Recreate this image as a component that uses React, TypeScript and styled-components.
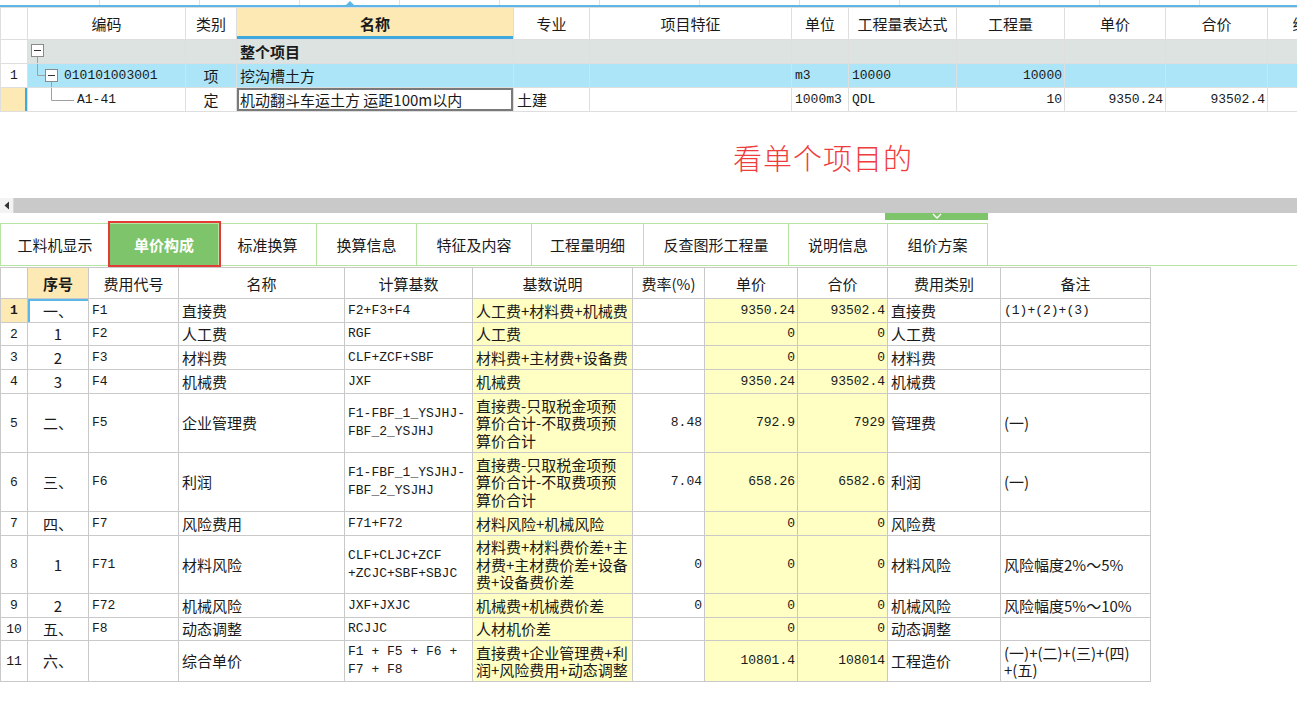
import React from "react";
import styled, { createGlobalStyle, css } from "styled-components";

const CJK = `"Noto Sans CJK SC", "Noto Sans", sans-serif`;
const MONO = `"Liberation Mono", "Noto Sans CJK SC", monospace`;

const GlobalStyle = createGlobalStyle`
  html, body { margin: 0; padding: 0; background: #fff; }
  body { font-family: ${CJK}; color: #1a1a1a; }
`;

const Page = styled.div`
  width: 1297px;
  height: 701px;
  overflow: hidden;
  display: flex;
  flex-direction: column;
  background: #fff;
`;

const TopStrip = styled.div`
  position: relative;
  flex: none;
  height: 5px;
  display: flex;
  border-bottom: 2px solid #5cb6e6;
`;
const StripSeg = styled.div`
  flex: none;
  width: 100px;
  box-sizing: border-box;
  border-right: 1px solid #e2e2e2;
`;
const StripMark = styled.div`
  position: absolute;
  left: 346px;
  bottom: 0;
  border-left: 4px solid transparent;
  border-right: 4px solid transparent;
  border-bottom: 4px solid #5cb6e6;
`;

const GridClip = styled.div`
  flex: none;
  width: 1297px;
  overflow: hidden;
`;

const Grid = styled.table<{ $w: number; $line: string }>`
  table-layout: fixed;
  border-collapse: collapse;
  width: ${(p) => p.$w}px;
  flex: none;
  font-family: ${CJK};
  font-size: 15px;
  color: #1a1a1a;
  td, th { border: 1px solid ${(p) => p.$line}; }
`;

const Row = styled.tr<{ $h: number; $bg?: string }>`
  height: ${(p) => p.$h}px;
  background: ${(p) => p.$bg ?? "transparent"};
`;

const Head = styled.th<{ $bg?: string; $bold?: boolean; $accent?: boolean }>`
  padding: 0 2px;
  font-weight: ${(p) => (p.$bold ? 700 : 400)};
  font-size: 15px;
  text-align: center;
  white-space: nowrap;
  overflow: hidden;
  background: ${(p) => p.$bg ?? "#fff"};
  ${(p) => p.$accent && css`box-shadow: inset 0 -3px 0 #3fa8df;`}
`;

type CellProps = {
  $align?: "left" | "center" | "right";
  $bg?: string;
  $mono?: boolean;
  $bold?: boolean;
  $ring?: string;
  $edge?: string;
};

const Cell = styled.td<CellProps>`
  padding: 0 ${(p) => (p.$align === "right" ? 2 : 3)}px;
  text-align: ${(p) => p.$align ?? "left"};
  background: ${(p) => p.$bg ?? "transparent"};
  font-family: ${(p) => (p.$mono ? MONO : CJK)};
  font-size: ${(p) => (p.$mono ? 13 : 15)}px;
  font-weight: ${(p) => (p.$bold ? 700 : 400)};
  line-height: ${(p) => (p.$mono ? 18 : 17.5)}px;
  white-space: nowrap;
  overflow: hidden;
  vertical-align: middle;
  ${(p) => p.$ring && css`box-shadow: inset 0 0 0 2px ${p.$ring};`}
  ${(p) => p.$edge && css`box-shadow: inset 2px 2px 0 ${p.$edge};`}
`;

const NumCell = styled.td<{ $bg?: string; $bold?: boolean; $edge?: boolean }>`
  padding: 0;
  text-align: center;
  font-family: ${MONO};
  font-size: 13px;
  font-weight: ${(p) => (p.$bold ? 700 : 400)};
  background: ${(p) => p.$bg ?? "#fff"};
  ${(p) => p.$edge && css`box-shadow: inset -2px 0 0 #3fa8df;`}
`;

const Tree = styled.div`
  display: flex;
  align-items: center;
  height: 23px;
  gap: 3px;
`;

const Code = styled.span`
  font-family: ${MONO};
  font-size: 13px;
`;

const Note = styled.div`
  flex: none;
  height: 86px;
  display: flex;
  align-items: center;
  padding-left: 733px;
  padding-top: 3px;
  box-sizing: border-box;
  color: #ef3d3d;
  font-family: ${CJK};
  font-weight: 300;
  font-size: 29px;
  letter-spacing: 1px;
`;

const ScrollBar = styled.div`
  flex: none;
  height: 15px;
  display: flex;
  background: #c9c9c9;
`;
const ScrollBtn = styled.div`
  width: 13px;
  display: flex;
  align-items: center;
  justify-content: center;
  background: #f3f3f3;
  border-right: 1px solid #d8d8d8;
`;

const HandleRow = styled.div`
  flex: none;
  height: 10px;
`;
const Handle = styled.div`
  margin-left: 885px;
  width: 103px;
  height: 7px;
  background: #7ec46b;
  display: flex;
  justify-content: center;
`;

const Tabs = styled.div`
  flex: none;
  display: flex;
  height: 42px;
  border-bottom: 1px solid #b7e3a3;
`;
const Tab = styled.div<{ $w: number; $active?: boolean }>`
  flex: none;
  width: ${(p) => p.$w}px;
  box-sizing: border-box;
  display: flex;
  align-items: center;
  justify-content: center;
  border: 1px solid #b7e3a3;
  border-bottom: none;
  border-left-width: 0;
  &:first-child { border-left-width: 1px; }
  font-size: 15px;
  color: #1a1a1a;
  ${(p) =>
    p.$active &&
    css`
      position: relative;
      z-index: 1;
      background: #7ec46b;
      color: #fff;
      font-weight: 700;
      outline: 2px solid #e33b36;
      outline-offset: 0;
    `}
`;

const TableGap = styled.div`
  flex: none;
  height: 1px;
`;

const Minus = ({ x, y }: { x: number; y: number }) => (
  <g>
    <rect x={x + 0.5} y={y + 0.5} width={12} height={12} fill="#fff" stroke="#8a8a8a" />
    <line x1={x + 3} y1={y + 6.5} x2={x + 10} y2={y + 6.5} stroke="#333" />
  </g>
);

const topCols = [27, 158, 51, 277, 76, 202, 57, 108, 108, 101, 102, 110];
const topHeads = ["", "编码", "类别", "名称", "专业", "项目特征", "单位", "工程量表达式", "工程量", "单价", "合价", "综合单价"];

const lowCols = [27, 61, 90, 166, 128, 160, 72, 93, 90, 113, 150];
const lowHeads = ["", "序号", "费用代号", "名称", "计算基数", "基数说明", "费率(%)", "单价", "合价", "费用类别", "备注"];

type Line = {
  n: string;
  seq: string;
  code: string;
  name: string;
  base: string[];
  desc: string[];
  rate?: string;
  price: string;
  total: string;
  kind: string;
  note?: string[];
  monoNote?: boolean;
  h: number;
};

const longBase = ["F1-FBF_1_YSJHJ-", "FBF_2_YSJHJ"];
const longDesc = ["直接费-只取税金项预", "算价合计-不取费项预", "算价合计"];

const lines: Line[] = [
  { n: "1", seq: "一、", code: "F1", name: "直接费", base: ["F2+F3+F4"], desc: ["人工费+材料费+机械费"], price: "9350.24", total: "93502.4", kind: "直接费", note: ["(1)+(2)+(3)"], monoNote: true, h: 24 },
  { n: "2", seq: "1", code: "F2", name: "人工费", base: ["RGF"], desc: ["人工费"], price: "0", total: "0", kind: "人工费", h: 23 },
  { n: "3", seq: "2", code: "F3", name: "材料费", base: ["CLF+ZCF+SBF"], desc: ["材料费+主材费+设备费"], price: "0", total: "0", kind: "材料费", h: 24 },
  { n: "4", seq: "3", code: "F4", name: "机械费", base: ["JXF"], desc: ["机械费"], price: "9350.24", total: "93502.4", kind: "机械费", h: 24 },
  { n: "5", seq: "二、", code: "F5", name: "企业管理费", base: longBase, desc: longDesc, rate: "8.48", price: "792.9", total: "7929", kind: "管理费", note: ["(一)"], h: 59 },
  { n: "6", seq: "三、", code: "F6", name: "利润", base: longBase, desc: longDesc, rate: "7.04", price: "658.26", total: "6582.6", kind: "利润", note: ["(一)"], h: 59 },
  { n: "7", seq: "四、", code: "F7", name: "风险费用", base: ["F71+F72"], desc: ["材料风险+机械风险"], price: "0", total: "0", kind: "风险费", h: 24 },
  { n: "8", seq: "1", code: "F71", name: "材料风险", base: ["CLF+CLJC+ZCF", "+ZCJC+SBF+SBJC"], desc: ["材料费+材料费价差+主", "材费+主材费价差+设备", "费+设备费价差"], rate: "0", price: "0", total: "0", kind: "材料风险", note: ["风险幅度2%～5%"], h: 58 },
  { n: "9", seq: "2", code: "F72", name: "机械风险", base: ["JXF+JXJC"], desc: ["机械费+机械费价差"], rate: "0", price: "0", total: "0", kind: "机械风险", note: ["风险幅度5%～10%"], h: 24 },
  { n: "10", seq: "五、", code: "F8", name: "动态调整", base: ["RCJJC"], desc: ["人材机价差"], price: "0", total: "0", kind: "动态调整", h: 23 },
  { n: "11", seq: "六、", code: "", name: "综合单价", base: ["F1 + F5 + F6 +", "F7 + F8"], desc: ["直接费+企业管理费+利", "润+风险费用+动态调整"], price: "10801.4", total: "108014", kind: "工程造价", note: ["(一)+(二)+(三)+(四)", "+(五)"], h: 41 },
];

const Multi = ({ rows }: { rows: string[] }) => (
  <>
    {rows.map((r, i) => (
      <React.Fragment key={i}>
        {i > 0 && <br />}
        {r}
      </React.Fragment>
    ))}
  </>
);

const YELLOW = "#ffffc4";
const HEAD_YELLOW = "#fde9b3";

export default function App() {
  return (
    <Page>
      <GlobalStyle />
      <TopStrip>
        {Array.from({ length: 13 }).map((_, i) => (
          <StripSeg key={i} />
        ))}
        <StripMark />
      </TopStrip>

      <GridClip>
        <Grid $w={1377} $line="#dedede">
          <colgroup>
            {topCols.map((w, i) => (
              <col key={i} style={{ width: w }} />
            ))}
          </colgroup>
          <tbody>
            <Row $h={32}>
              {topHeads.map((h, i) => (
                <Head key={i} $bold={i === 3} $bg={i === 3 ? HEAD_YELLOW : undefined} $accent={i === 3}>
                  {h}
                </Head>
              ))}
            </Row>
            <Row $h={24} $bg="#dce3e0">
              <NumCell />
              <Cell>
                <Tree>
                  <svg width="17" height="23" viewBox="0 0 17 23">
                    <line x1="6.5" y1="17" x2="6.5" y2="23" stroke="#a0a0a0" />
                    <Minus x={0} y={4} />
                  </svg>
                </Tree>
              </Cell>
              <Cell />
              <Cell $bold>整个项目</Cell>
              {Array.from({ length: 8 }).map((_, i) => (
                <Cell key={i} />
              ))}
            </Row>
            <Row $h={24} $bg="#ade5f8">
              <NumCell $bg="#fff">1</NumCell>
              <Cell>
                <Tree>
                  <svg width="30" height="23" viewBox="0 0 30 23">
                    <polyline points="6.5,0 6.5,11.5 14,11.5" fill="none" stroke="#a0a0a0" />
                    <line x1="20.5" y1="17" x2="20.5" y2="23" stroke="#a0a0a0" />
                    <Minus x={14} y={5} />
                  </svg>
                  <Code>010101003001</Code>
                </Tree>
              </Cell>
              <Cell $align="center">项</Cell>
              <Cell>挖沟槽土方</Cell>
              <Cell />
              <Cell />
              <Cell $mono>m3</Cell>
              <Cell $mono>10000</Cell>
              <Cell $mono $align="right">10000</Cell>
              <Cell />
              <Cell />
              <Cell />
            </Row>
            <Row $h={24}>
              <NumCell $bg={HEAD_YELLOW} $edge />
              <Cell>
                <Tree>
                  <svg width="43" height="23" viewBox="0 0 43 23">
                    <polyline points="20.5,0 20.5,12.5 43,12.5" fill="none" stroke="#a0a0a0" />
                  </svg>
                  <Code>A1-41</Code>
                </Tree>
              </Cell>
              <Cell $align="center">定</Cell>
              <Cell $ring="#7a7a7a">机动翻斗车运土方 运距100m以内</Cell>
              <Cell>土建</Cell>
              <Cell />
              <Cell $mono>1000m3</Cell>
              <Cell $mono>QDL</Cell>
              <Cell $mono $align="right">10</Cell>
              <Cell $mono $align="right">9350.24</Cell>
              <Cell $mono $align="right">93502.4</Cell>
              <Cell />
            </Row>
          </tbody>
        </Grid>
      </GridClip>

      <Note>看单个项目的</Note>

      <ScrollBar>
        <ScrollBtn>
          <svg width="6" height="9" viewBox="0 0 6 9">
            <polygon points="5,0.5 5,8.5 0.5,4.5" fill="#333" />
          </svg>
        </ScrollBtn>
      </ScrollBar>

      <HandleRow>
        <Handle>
          <svg width="12" height="7" viewBox="0 0 12 7">
            <polyline points="2,1 6,5 10,1" fill="none" stroke="#fff" strokeWidth="1.4" />
          </svg>
        </Handle>
      </HandleRow>

      <Tabs>
        <Tab $w={110}>工料机显示</Tab>
        <Tab $w={109} $active>单价构成</Tab>
        <Tab $w={98}>标准换算</Tab>
        <Tab $w={100}>换算信息</Tab>
        <Tab $w={115}>特征及内容</Tab>
        <Tab $w={112}>工程量明细</Tab>
        <Tab $w={145}>反查图形工程量</Tab>
        <Tab $w={99}>说明信息</Tab>
        <Tab $w={100}>组价方案</Tab>
      </Tabs>

      <TableGap />

      <Grid $w={1150} $line="#c9c9c9">
        <colgroup>
          {lowCols.map((w, i) => (
            <col key={i} style={{ width: w }} />
          ))}
        </colgroup>
        <tbody>
          <Row $h={31}>
            {lowHeads.map((h, i) => (
              <Head key={i} $bold={i === 1} $bg={i === 1 ? HEAD_YELLOW : undefined}>
                {h}
              </Head>
            ))}
          </Row>
          {lines.map((l, i) => (
            <Row key={l.n} $h={l.h}>
              <NumCell $bg={i === 0 ? HEAD_YELLOW : undefined} $bold={i === 0}>
                {l.n}
              </NumCell>
              <Cell $align="center" $edge={i === 0 ? "#5cb6e6" : undefined}>
                {l.seq}
              </Cell>
              <Cell $mono>{l.code}</Cell>
              <Cell>{l.name}</Cell>
              <Cell $mono>
                <Multi rows={l.base} />
              </Cell>
              <Cell $bg={YELLOW}>
                <Multi rows={l.desc} />
              </Cell>
              <Cell $mono $align="right">
                {l.rate ?? ""}
              </Cell>
              <Cell $mono $align="right" $bg={YELLOW}>
                {l.price}
              </Cell>
              <Cell $mono $align="right" $bg={YELLOW}>
                {l.total}
              </Cell>
              <Cell>{l.kind}</Cell>
              <Cell $mono={l.monoNote}>
                <Multi rows={l.note ?? []} />
              </Cell>
            </Row>
          ))}
        </tbody>
      </Grid>
    </Page>
  );
}
